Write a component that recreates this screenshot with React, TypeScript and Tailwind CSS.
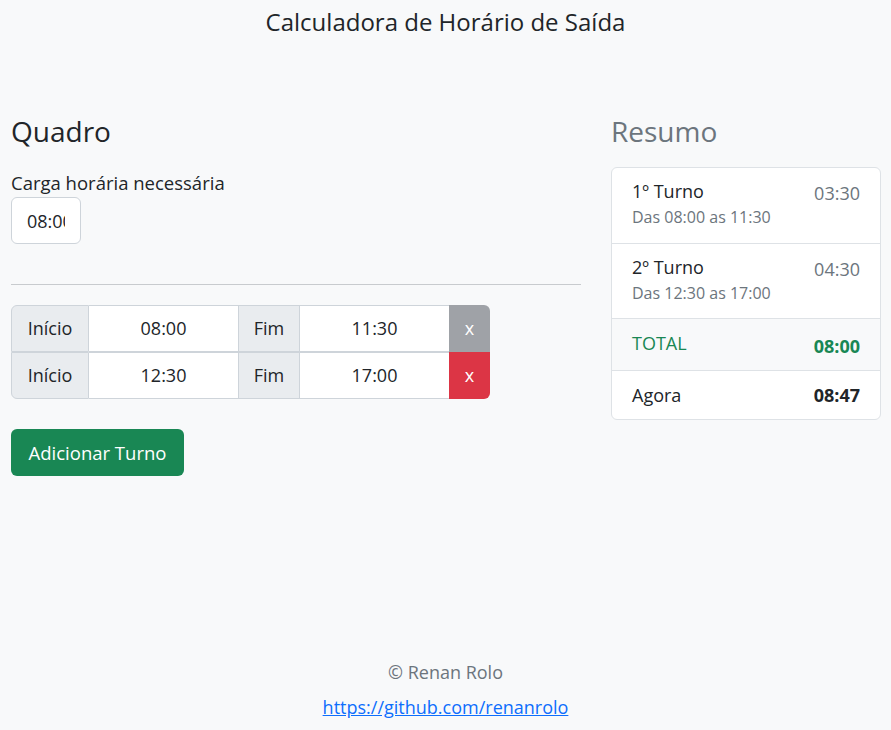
export default function App() {
  const turnos = [
    { inicio: '08:00', fim: '11:30', dur: '03:30', h: 'h-[76px]' },
    { inicio: '12:30', fim: '17:00', dur: '04:30', h: 'h-[75px]' },
  ];

  return (
    <div
      className="min-h-[730px] bg-[#f8f9fa] text-[#212529] flex flex-col"
      style={{ fontFamily: '"Open Sans", sans-serif' }}
    >
      <h1 className="text-center text-[24px] leading-[1.2] pt-[8px]">Calculadora de Horário de Saída</h1>

      <div className="grid grid-cols-[570px_270px] gap-[30px] pl-[11px] pr-[10px] mt-[78px]">
        {/* Quadro */}
        <div>
          <h3 className="text-[28px] leading-[1.2] mb-[21px]">Quadro</h3>
          <label className="block text-[18.5px] leading-[1.5]" htmlFor="carga">
            Carga horária necessária
          </label>
          <input
            id="carga"
            defaultValue="08:00"
            className="w-[70px] h-[47px] border border-[#ced4da] rounded-[6px] bg-white px-[15px] text-[18px] outline-none"
          />
          <hr className="border-0 border-t border-[#c8cbce] mt-[40px] mb-[20px]" />

          <div className="w-[479px]">
            {turnos.map((t, i) => (
              <div key={i} className="flex h-[47px] text-[18px]">
                <span
                  className={`w-[78px] flex items-center justify-center bg-[#e9ecef] border border-[#ced4da] ${
                    i === 0 ? 'rounded-tl-[6px]' : 'rounded-bl-[6px]'
                  }`}
                >
                  Início
                </span>
                <input
                  defaultValue={t.inicio}
                  className="w-[149px] bg-white border-y border-[#ced4da] text-center outline-none"
                />
                <span className="w-[62px] flex items-center justify-center bg-[#e9ecef] border border-[#ced4da]">
                  Fim
                </span>
                <input
                  defaultValue={t.fim}
                  className="w-[149px] bg-white border-y border-[#ced4da] text-center outline-none"
                />
                <button
                  className={`w-[41px] text-white ${
                    i === 0 ? 'bg-[#9fa2a7] rounded-tr-[6px]' : 'bg-[#dc3545] rounded-br-[6px]'
                  }`}
                >
                  x
                </button>
              </div>
            ))}
          </div>

          <button className="mt-[30px] h-[47px] w-[173px] bg-[#198754] text-white text-[18.5px] rounded-[6px]">
            Adicionar Turno
          </button>
        </div>

        {/* Resumo */}
        <div>
          <h3 className="text-[28px] leading-[1.2] text-[#6c757d] mb-[19px]">Resumo</h3>
          <ul className="bg-white border border-[#dee2e6] rounded-[6px] overflow-hidden">
            {turnos.map((t, i) => (
              <li key={i} className={`flex justify-between px-[20px] pt-[10px] ${t.h} border-b border-[#dee2e6]`}>
                <div>
                  <div className="text-[18px] leading-[1.5]">{i + 1}º Turno</div>
                  <div className="text-[16px] text-[#6c757d] leading-[1.5]">
                    Das {t.inicio} as {t.fim}
                  </div>
                </div>
                <div className="text-[18px] text-[#6c757d] pt-[2px]">{t.dur}</div>
              </li>
            ))}
            <li className="flex justify-between items-start px-[20px] pt-[11px] h-[52px] bg-[#f8f9fa] border-b border-[#dee2e6]">
              <span className="text-[18px] text-[#198754]">TOTAL</span>
              <span className="text-[18px] text-[#198754] font-bold pt-[3px]">08:00</span>
            </li>
            <li className="flex justify-between items-center px-[20px] h-[48px]">
              <span className="text-[18px]">Agora</span>
              <span className="text-[18px] font-bold">08:47</span>
            </li>
          </ul>
        </div>
      </div>

      <footer className="mt-auto pb-[9px] text-center text-[18px]">
        <p className="text-[#6c757d] leading-[1.5] mb-[8px]">© Renan Rolo</p>
        <a href="#" className="text-[#0d6efd] underline">
          https://github.com/renanrolo
        </a>
      </footer>
    </div>
  );
}
